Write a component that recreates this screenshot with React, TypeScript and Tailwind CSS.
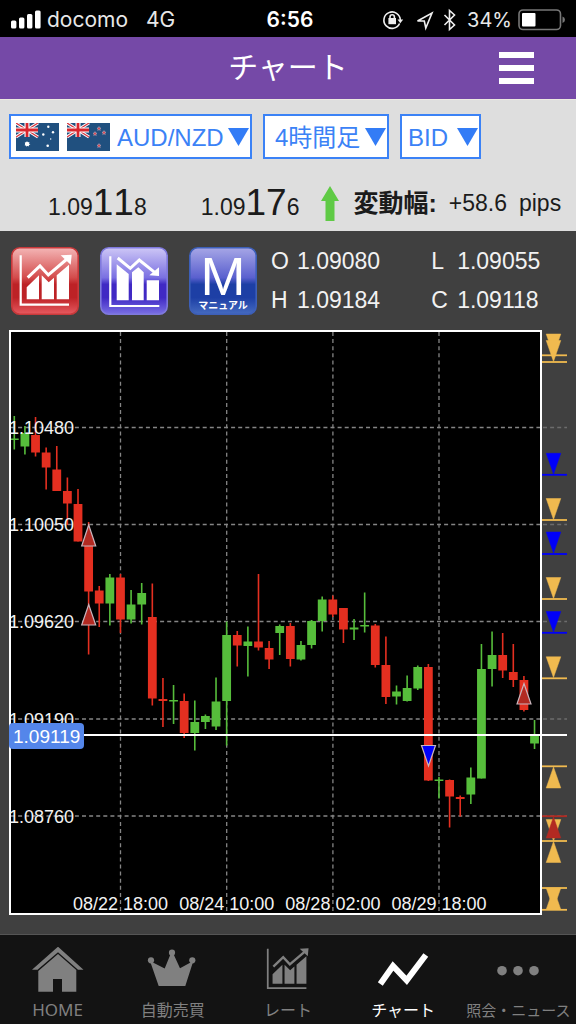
import type { ReactNode } from "react";

type Candle = [high: number, top: number, bottom: number, low: number, rising: 0 | 1];

const CANDLES: Candle[] = [
  [416, 438.5, 440, 449.5, 1],
  [426, 433, 446.5, 454.5, 1],
  [417, 435, 452.5, 456.5, 0],
  [447.5, 452.5, 467.5, 489.5, 0],
  [446, 469.5, 491, 491, 0],
  [477.5, 491, 503.5, 525, 0],
  [489, 504, 541.5, 541.5, 0],
  [522, 541, 591.5, 654.5, 0],
  [586, 590.5, 603.5, 627, 0],
  [574, 577.5, 603.5, 625.5, 1],
  [574, 577.5, 619.5, 633, 0],
  [590, 604.5, 619.5, 623.5, 1],
  [583, 593, 604.5, 624.5, 1],
  [583.5, 617, 698.5, 705.5, 0],
  [678, 699, 701, 727, 0],
  [685, 700, 701.5, 724, 1],
  [693.5, 701, 733, 738, 0],
  [700.5, 722, 733, 750.5, 1],
  [714.5, 716, 722, 729, 1],
  [677.5, 701.5, 726.5, 730, 1],
  [621.5, 635, 701, 745.5, 1],
  [631, 635, 645.5, 666.5, 0],
  [626.5, 641.5, 646, 676.5, 1],
  [574, 641.5, 647.5, 650.5, 0],
  [641, 648, 659.5, 669, 0],
  [624.5, 626, 633, 655, 1],
  [623, 626, 659, 666.5, 0],
  [641, 645, 659.5, 660.5, 1],
  [620, 621, 645, 648.5, 1],
  [596.5, 599.5, 621, 631.5, 1],
  [595.5, 599.5, 614.5, 617, 0],
  [608, 608, 629.5, 643, 0],
  [619, 627.5, 629.5, 640, 1],
  [592.5, 625, 626.5, 632.5, 1],
  [624, 625.5, 665, 667.5, 0],
  [636.5, 665, 697, 704, 0],
  [685.5, 691.5, 696.5, 704.5, 1],
  [675.5, 688, 701, 701.5, 1],
  [665.5, 667, 688.5, 690, 1],
  [664, 667, 780.5, 781, 0],
  [777, 779.5, 781, 798.5, 1],
  [779.5, 780, 796.5, 827.5, 0],
  [795.5, 797, 799, 816.5, 0],
  [767.5, 777.5, 794.5, 804, 1],
  [644, 669, 778.5, 778.5, 1],
  [631.5, 655, 669, 686.5, 1],
  [633, 655, 670.5, 678, 0],
  [644, 672, 680, 687, 0],
  [676, 680, 710, 711.5, 0],
  [720, 735, 743.5, 749, 1],
];

const PRICE_LEVELS = [
  { y: 427.5, label: "1.10480" },
  { y: 524.5, label: "1.10050" },
  { y: 621.5, label: "1.09620" },
  { y: 719, label: "1.09190" },
  { y: 816, label: "1.08760" },
];

const TIME_LEVELS = [
  { x: 120.5, label: "08/22 18:00" },
  { x: 226.7, label: "08/24 10:00" },
  { x: 332.9, label: "08/28 02:00" },
  { x: 439, label: "08/29 18:00" },
];

const GOLD = "#f0ba4f";
const BLUE = "#0000fa";
const CRIMSON = "#b22a22";

const ORDER_LINES = [
  { y: 355.3, color: GOLD },
  { y: 362, color: GOLD },
  { y: 474.8, color: BLUE },
  { y: 520, color: GOLD },
  { y: 554, color: BLUE },
  { y: 599, color: GOLD },
  { y: 632.8, color: BLUE },
  { y: 678.3, color: GOLD },
  { y: 766.3, color: GOLD },
  { y: 816.2, color: CRIMSON },
  { y: 841, color: GOLD },
  { y: 888, color: GOLD },
  { y: 909.8, color: GOLD },
];

const ORDER_MARKS = [
  { base: 334, tip: 355, color: GOLD },
  { base: 340.5, tip: 361.5, color: GOLD },
  { base: 453.3, tip: 474, color: BLUE },
  { base: 498.5, tip: 519.5, color: GOLD },
  { base: 532, tip: 553, color: BLUE },
  { base: 577.5, tip: 598.5, color: GOLD },
  { base: 611.5, tip: 632, color: BLUE },
  { base: 656.8, tip: 677.5, color: GOLD },
  { base: 788, tip: 767, color: GOLD },
  { base: 819.5, tip: 841, color: GOLD },
  { base: 838, tip: 817, color: CRIMSON },
  { base: 862.5, tip: 841.5, color: GOLD },
  { base: 888, tip: 909, color: GOLD },
  { base: 909.5, tip: 888.5, color: GOLD },
];

const TRADE_MARKS = [
  { x: 88.7, base: 546, tip: 525, color: CRIMSON },
  { x: 88.7, base: 625, tip: 604.5, color: CRIMSON },
  { x: 524, base: 704, tip: 683.5, color: CRIMSON },
  { x: 428.5, base: 745.5, tip: 766, color: BLUE },
];

function PriceChart() {
  return (
    <svg
      viewBox="0 330 576 586"
      role="img"
      aria-label="AUD/NZD"
      className="block h-auto w-full font-['Liberation_Sans',sans-serif] text-[18px]"
    >
      <rect x="10" y="331" width="531" height="583" fill="#000" />
      <g stroke="#858585" strokeWidth="1.3" strokeDasharray="4 3.1">
        {PRICE_LEVELS.map((p) => (
          <line key={p.label} x1="11" x2="541" y1={p.y} y2={p.y} />
        ))}
        {TIME_LEVELS.map((t) => (
          <line key={t.label} x1={t.x} x2={t.x} y1="332" y2="913" />
        ))}
      </g>
      <g stroke="#6c6c6c" strokeWidth="1.3" strokeDasharray="4 3.1">
        {PRICE_LEVELS.map((p) => (
          <line key={p.label} x1="543" x2="567" y1={p.y} y2={p.y} />
        ))}
      </g>
      {CANDLES.map(([high, top, bottom, low, rising], i) => {
        const x = 14.3 + i * 10.617;
        const left = Math.max(x - 4.4, 11);
        return (
          <g key={i} fill={rising ? "#56bd3b" : "#e42f20"}>
            <rect x={x - 0.8} y={high} width="1.6" height={low - high} />
            <rect x={left} y={top} width={x + 4.4 - left} height={bottom - top} />
          </g>
        );
      })}
      <rect x="10" y="331" width="531" height="583" fill="none" stroke="#fff" strokeWidth="2" />
      {TRADE_MARKS.map((m) => (
        <path
          key={`${m.x}-${m.tip}`}
          d={`M${m.x - 7} ${m.base}H${m.x + 7}L${m.x} ${m.tip}Z`}
          fill={m.color}
          stroke="#c9b5bd"
          strokeWidth="1.2"
        />
      ))}
      {ORDER_LINES.map((l) => (
        <line key={l.y} x1="542" x2="567" y1={l.y} y2={l.y} stroke={l.color} strokeWidth="1.8" />
      ))}
      {ORDER_MARKS.map((m) => (
        <path
          key={`${m.base}-${m.tip}`}
          d={`M546.2 ${m.base}H560.8L553.5 ${m.tip}Z`}
          fill={m.color}
          stroke={m.color}
          strokeWidth=".5"
        />
      ))}
      <line x1="84" x2="567" y1="735" y2="735" stroke="#fff" strokeWidth="2" />
      <g fill="#f2f2f2">
        {PRICE_LEVELS.map((p) => (
          <text key={p.label} x="9" y={p.y + 6.5}>
            {p.label}
          </text>
        ))}
        {TIME_LEVELS.map((t) => (
          <text key={t.label} x={t.x} y="910" textAnchor="middle">
            {t.label}
          </text>
        ))}
      </g>
      <rect x="9" y="723" width="75" height="26" rx="4" fill="#5486ea" />
      <text x="13" y="743" fill="#fff" fontSize="19">
        1.09119
      </text>
    </svg>
  );
}

function UnionFlag() {
  return (
    <g>
      <path d="M0 0L22 14M22 0L0 14" stroke="#fff" strokeWidth="3.2" />
      <path d="M0 0L22 14M22 0L0 14" stroke="#d8343c" strokeWidth="1.3" />
      <path d="M11 0V14M0 7H22" stroke="#fff" strokeWidth="5" />
      <path d="M11 0V14M0 7H22" stroke="#d8262e" strokeWidth="2.8" />
    </g>
  );
}

function AustraliaFlag() {
  return (
    <svg viewBox="0 0 43 28" className="mr-2 h-7 w-[43px] shrink-0" aria-hidden="true">
      <rect width="43" height="28" fill="#20507f" />
      <UnionFlag />
      <g fill="#fff">
        <path d="M11 18l.8 1.4 1.7-.4-.5 1.5 1.4.9-1.6.6.2 1.6-1.4-.8-1.1 1-.4-1.5-1.6-.1 1-1.3-.8-1.4 1.5.1z" />
        <circle cx="11" cy="21" r="2.1" />
        <circle cx="32.3" cy="3.8" r="1.2" />
        <circle cx="27.3" cy="11.5" r="1.2" />
        <circle cx="37" cy="9.3" r="1.2" />
        <circle cx="34.7" cy="16" r=".7" />
        <circle cx="31.7" cy="22.8" r="1.3" />
      </g>
    </svg>
  );
}

function NewZealandFlag() {
  const stars = [
    [32, 5.5],
    [28, 10.6],
    [37, 9.6],
    [32, 22.6],
  ];
  return (
    <svg viewBox="0 0 43 28" className="mr-[7px] h-7 w-[43px] shrink-0" aria-hidden="true">
      <rect width="43" height="28" fill="#20507f" />
      <UnionFlag />
      {stars.map(([x, y]) => (
        <path
          key={`${x}-${y}`}
          transform={`translate(${x} ${y})`}
          d="M0-2L.6-.6 2-.5.9.5 1.3 1.9 0 1.1-1.3 1.9-.9.5-2-.5-.6-.6Z"
          fill="#d8424c"
          stroke="#c9b3c2"
          strokeWidth=".5"
        />
      ))}
    </svg>
  );
}

function Dropdown({
  label,
  options,
  className,
  children,
}: {
  label: string;
  options: string[];
  className: string;
  children?: ReactNode;
}) {
  return (
    <label
      className={`flex h-[45px] items-center border-2 border-[#3b82f6] bg-white pr-px text-2xl text-[#3b82f6] ${className}`}
    >
      {children}
      <select
        aria-label={label}
        defaultValue={options[0]}
        className="h-full min-w-0 flex-1 appearance-none bg-transparent pt-0.5 pr-[21px] outline-none"
      >
        {options.map((o) => (
          <option key={o}>{o}</option>
        ))}
      </select>
      <svg
        viewBox="0 0 21 18"
        className="pointer-events-none -ml-[21px] h-[18px] w-[21px] shrink-0"
        aria-hidden="true"
      >
        <path d="M0 0H21L10.5 18Z" fill="#337cf6" />
      </svg>
    </label>
  );
}

function RisingGlyph() {
  return (
    <>
      <path d="M9.7 8.3V57.7H58" fill="none" stroke="currentColor" strokeWidth="2.2" />
      <path
        d="M15.7 40.3L28 28.3V52.3H15.7ZM30.7 28.3L37.7 35.3 43 30.7V52.3H30.7ZM45.7 28.3L58 17.7V52.3H45.7Z"
        fill="currentColor"
      />
      <path d="M16.7 30.7L29 19 37.3 28 56 12" fill="none" stroke="currentColor" strokeWidth="3" />
      <path d="M49.7 8.3L60.7 7.7 59.7 17.7Z" fill="currentColor" />
    </>
  );
}

function FallingGlyph() {
  return (
    <>
      <path d="M10.3 9.3V59H59.3" fill="none" stroke="currentColor" strokeWidth="2.2" />
      <path
        d="M16.7 17.3L28.7 27V53.3H16.7ZM32 25.3L38.3 20.3 43.7 25.3V53.3H32ZM46.7 33.3H59V53.3H46.7Z"
        fill="currentColor"
      />
      <path d="M17.7 11L30.3 21.3 39.3 13 55 25.7" fill="none" stroke="currentColor" strokeWidth="3" />
      <path d="M59 20.3V29L49.3 28.3Z" fill="currentColor" />
    </>
  );
}

function Tile({
  id,
  label,
  stops,
  edge,
  children,
}: {
  id: string;
  label: string;
  stops: [string, string, string, string];
  edge: string;
  children: ReactNode;
}) {
  return (
    <button type="button" aria-label={label} className="size-[68px] shrink-0">
      <svg viewBox="0 0 68 68" className="size-full text-white">
        <defs>
          <linearGradient id={id} x1="0" y1="0" x2="0" y2="1">
            <stop offset="0" stopColor={stops[0]} />
            <stop offset=".45" stopColor={stops[1]} />
            <stop offset=".55" stopColor={stops[2]} />
            <stop offset=".75" stopColor={stops[2]} />
            <stop offset="1" stopColor={stops[3]} />
          </linearGradient>
        </defs>
        <rect x=".8" y=".8" width="66.4" height="66.4" rx="8" fill={`url(#${id})`} stroke={edge} strokeWidth="1.6" />
        {children}
      </svg>
    </button>
  );
}

function StatusBar() {
  return (
    <div className="grid h-[37px] grid-cols-[1fr_auto_1fr] items-center bg-black px-[10px] pt-0.5 font-[Inter,sans-serif] text-[21px] text-[#e8e8e8]">
      <div className="flex items-center">
        <svg viewBox="0 0 31 19" className="h-[19px] w-[31px]" fill="#fff" aria-hidden="true">
          <rect x="1" y="10.5" width="5.4" height="8" rx="1.5" />
          <rect x="9" y="7.5" width="5.4" height="11" rx="1.5" />
          <rect x="17" y="4" width="5.4" height="14.5" rx="1.5" />
          <rect x="25" y=".5" width="5.6" height="18" rx="1.5" />
        </svg>
        <span className="ml-1.5">docomo</span>
        <span className="ml-[18px]">4G</span>
      </div>
      <span className="pl-1 font-semibold text-white">6:56</span>
      <div className="flex items-center justify-end">
        <svg viewBox="0 0 75 24" className="h-6 w-[75px]" aria-hidden="true">
          <g fill="none" stroke="#eee" strokeWidth="1.6">
            <path d="M17.6 15.5A8.2 8.2 0 1 1 18.3 12" />
            <rect x="7.2" y="10.8" width="6" height="4.6" fill="#eee" />
            <path d="M8 11V9a2.2 2.2 0 0 1 4.4 0V11" />
            <path d="M35.5 13L50 5 43.8 20 42.3 13Z" />
            <path d="M62.5 7L72.5 17 67.5 21.5V2.5L72.5 7 62.5 17" />
          </g>
          <path d="M15.5 11.5H21.2L18.3 15.2Z" fill="#eee" />
        </svg>
        <span className="ml-2.5 text-xl">34%</span>
        <svg viewBox="0 0 48 22" className="ml-1.5 h-[22px] w-12" aria-hidden="true">
          <rect x="1" y="1" width="41.5" height="19.5" rx="4" fill="none" stroke="#777" strokeWidth="1.6" />
          <rect x="4" y="4" width="13.5" height="13.5" rx="1" fill="#fff" />
          <path d="M44.5 7.5Q47 8.5 47 10.8T44.5 14Z" fill="#777" />
        </svg>
      </div>
    </div>
  );
}

function Quote({ head, main, tail }: { head: string; main: string; tail: string }) {
  return (
    <span className="flex h-10 items-baseline text-[23px] leading-10 [font-kerning:none]">
      <span>{head}</span>
      <span className="text-[37px]">{main}</span>
      <span>{tail}</span>
    </span>
  );
}

const OHLC = [
  ["O", "1.09080"],
  ["L", "1.09055"],
  ["H", "1.09184"],
  ["C", "1.09118"],
];

const TABS: { label: string; active?: boolean; size: string; icon: ReactNode }[] = [
  {
    label: "HOME",
    size: "text-[17px]",
    icon: (
      <path
        d="M0 22.7L26 -.3 51.5 22.7H46L26 5.3 5.5 22.7ZM26 7L44.3 23V44.7H30V32H21V44.7H6.3V24Z"
        fill="currentColor"
      />
    ),
  },
  {
    label: "自動売買",
    size: "text-base",
    icon: (
      <g fill="currentColor">
        <circle cx="4" cy="13.3" r="3.1" />
        <circle cx="25" cy="5.7" r="3.1" />
        <circle cx="45.3" cy="13.3" r="3.1" />
        <path d="M3 14L17.7 21.5 24 6H26L33 21.3 46.3 14 38.3 39H11.7Z" />
      </g>
    ),
  },
  {
    label: "レート",
    size: "text-base",
    icon: (
      <g transform="translate(-2 -5) scale(.8)">
        <RisingGlyph />
      </g>
    ),
  },
  {
    label: "チャート",
    active: true,
    size: "text-base",
    icon: (
      <path
        d="M2.3 37L15 19 28.7 33.3 47.8 8"
        transform="translate(1 0)"
        fill="none"
        stroke="currentColor"
        strokeWidth="6"
      />
    ),
  },
  {
    label: "照会・ニュース",
    size: "text-[15px]",
    icon: (
      <g fill="currentColor">
        <circle cx="10" cy="23.7" r="4.8" />
        <circle cx="26" cy="23.7" r="4.8" />
        <circle cx="42" cy="23.7" r="4.8" />
      </g>
    ),
  },
];

export default function App() {
  return (
    <div className="flex min-h-screen flex-col bg-[#404040] font-['Liberation_Sans','Noto_Sans_CJK_JP',sans-serif]">
      <StatusBar />
      <header className="grid h-[63px] grid-cols-[1fr_auto_1fr] items-center border-b border-[#ece9e0] bg-[#7549a7] text-white">
        <h1 className="col-start-2 text-[30px] leading-10">チャート</h1>
        <button type="button" aria-label="メニュー" className="mr-[42px] flex w-[35px] flex-col gap-[7px] justify-self-end">
          <span className="h-1.5 bg-white" />
          <span className="h-1.5 bg-white" />
          <span className="h-1.5 bg-white" />
        </button>
      </header>

      <section className="bg-[#dedede] px-[9px] pt-[14px] pb-2 text-[#1b1b1b]">
        <div className="flex gap-[11px]">
          <Dropdown label="通貨ペア" options={["AUD/NZD"]} className="w-[243px] pl-[5px]">
            <AustraliaFlag />
            <NewZealandFlag />
          </Dropdown>
          <Dropdown label="時間足" options={["4時間足"]} className="w-[126px] pl-2.5" />
          <Dropdown label="気配" options={["BID"]} className="w-[81px] pl-1.5" />
        </div>
        <div className="mt-6 flex items-center">
          <div className="flex gap-[54px] pl-[39px]">
            <Quote head="1.09" main="11" tail="8" />
            <Quote head="1.09" main="17" tail="6" />
          </div>
          <svg viewBox="0 0 18 35" className="ml-[22px] h-[35px] w-[18px] shrink-0" aria-hidden="true">
            <path d="M9 0L18 15H13.5V35H4.5V15H0Z" fill="#5fca45" />
          </svg>
          <span className="ml-3.5 text-[25px] leading-10 font-bold whitespace-nowrap">変動幅:</span>
          <span className="ml-3 text-[23px] leading-10 whitespace-nowrap">+58.6</span>
          <span className="ml-3 text-[23px] leading-10">pips</span>
        </div>
      </section>

      <main className="flex-1 pb-4">
        <div className="flex items-center pt-[11px] pb-2.5 pl-[11px]">
          <div className="flex gap-[21px]">
            <Tile id="tile-up" label="買い" stops={["#f4b5b5", "#d34b4b", "#bd2226", "#e65a60"]} edge="#c8393b">
              <RisingGlyph />
            </Tile>
            <Tile id="tile-down" label="売り" stops={["#cdc6f6", "#7a70e2", "#4029c4", "#7a70e4"]} edge="#7f79dd">
              <FallingGlyph />
            </Tile>
            <Tile id="tile-manual" label="マニュアル" stops={["#a6a6e6", "#5a60cf", "#1d3fa5", "#456bc0"]} edge="#3d5fb8">
              <text x="34" y="48" fontSize="54" textAnchor="middle" fill="#fff">
                M
              </text>
              <text x="34" y="62" fontSize="10" fontWeight="700" textAnchor="middle" fill="#fff">
                マニュアル
              </text>
            </Tile>
          </div>
          <dl className="ml-3.5 grid grid-cols-2 gap-x-[51px] text-[23px] leading-[39px] text-[#f2f2f2]">
            {OHLC.map(([k, v]) => (
              <div key={k} className="flex">
                <dt className="w-[26px]">{k}</dt>
                <dd>{v}</dd>
              </div>
            ))}
          </dl>
        </div>
        <PriceChart />
      </main>

      <nav className="grid h-[90px] grid-cols-5 border-t border-[#555] bg-[#131313]">
        {TABS.map((t) => (
          <a
            key={t.label}
            href="#"
            aria-current={t.active ? "page" : undefined}
            className={`flex flex-col items-center pt-3 ${t.active ? "text-white" : "text-[#808080]"}`}
          >
            <svg viewBox="0 0 52 46" className="h-[46px] w-[52px]" aria-hidden="true">
              {t.icon}
            </svg>
            <span
              className={`mt-[5px] font-['Noto_Sans','Noto_Sans_CJK_JP',sans-serif] leading-6 whitespace-nowrap ${t.size}`}
            >
              {t.label}
            </span>
          </a>
        ))}
      </nav>
    </div>
  );
}
